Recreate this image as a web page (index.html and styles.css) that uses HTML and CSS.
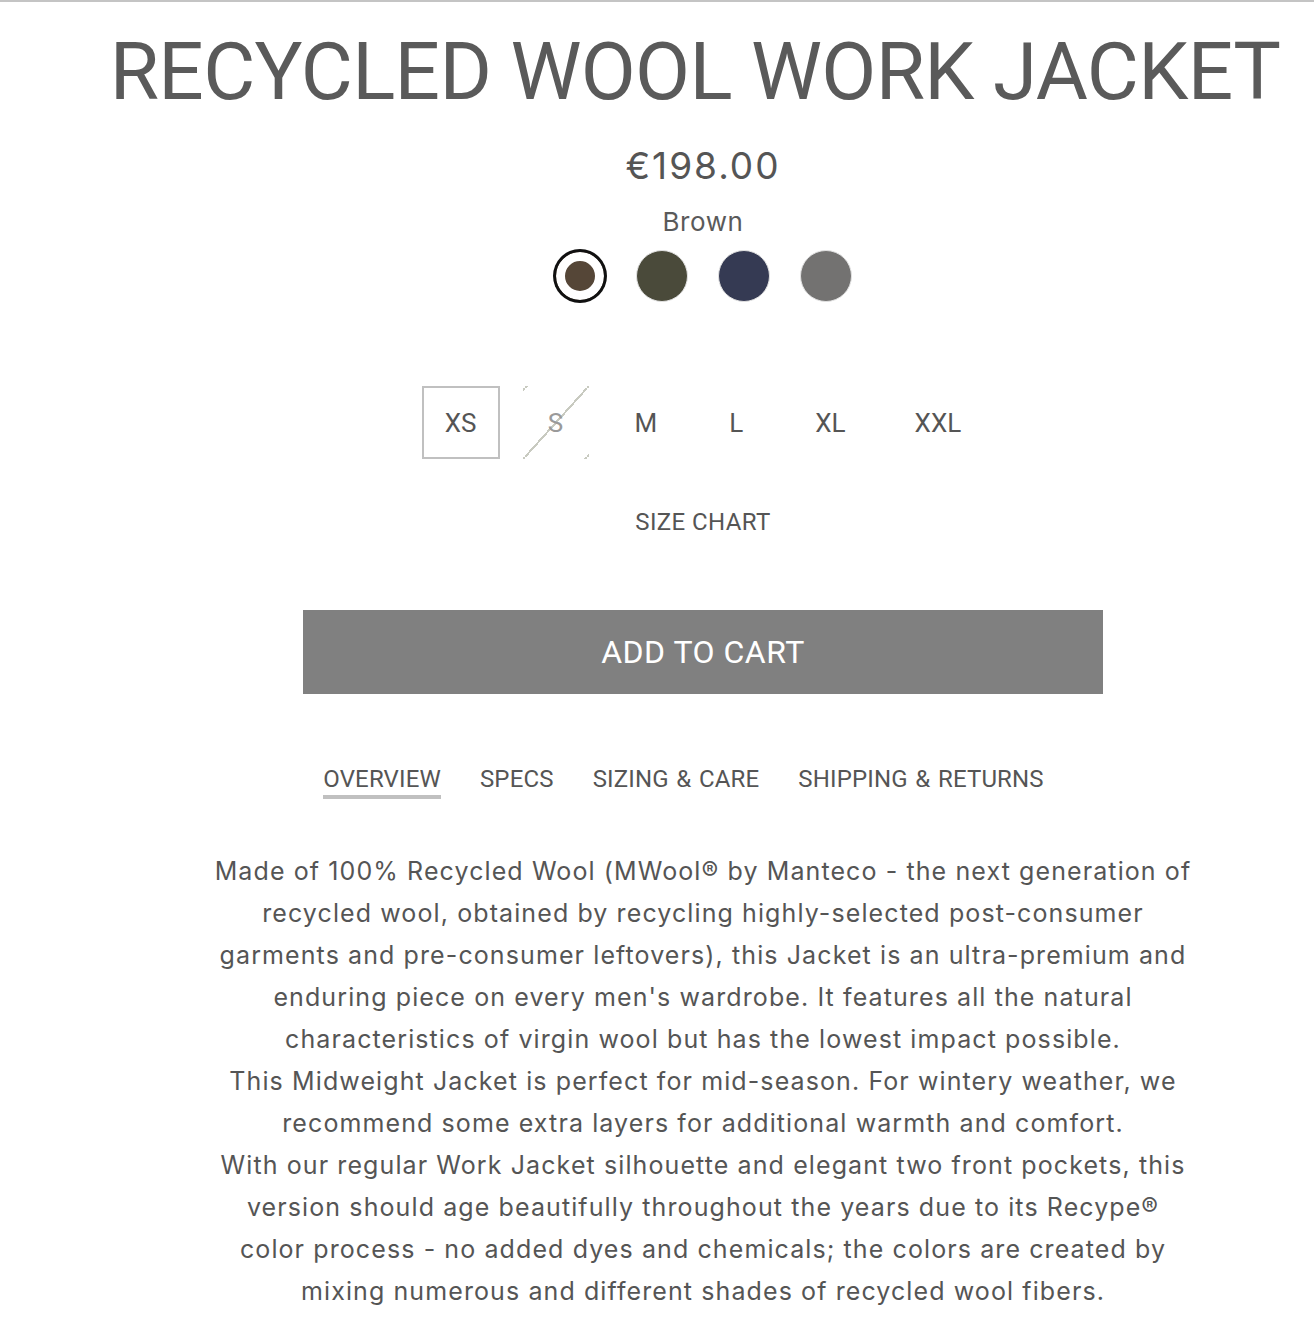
FILE: index.html
```html
<!DOCTYPE html>
<html lang="en">
<head>
<meta charset="utf-8">
<title>Recycled Wool Work Jacket</title>
<link rel="stylesheet" href="styles.css">
</head>
<body>
<div class="page">
  <h1 class="title">RECYCLED WOOL WORK JACKET</h1>
  <div class="product">
    <div class="price">€198.00</div>
    <div class="color-name">Brown</div>
    <div class="swatches">
      <span class="swatch swatch-brown is-selected"></span>
      <span class="swatch swatch-olive"></span>
      <span class="swatch swatch-navy"></span>
      <span class="swatch swatch-grey"></span>
    </div>
    <div class="sizes">
      <span class="size is-selected">XS</span>
      <span class="size is-disabled">S</span>
      <span class="size">M</span>
      <span class="size">L</span>
      <span class="size">XL</span>
      <span class="size">XXL</span>
    </div>
    <a class="size-chart">SIZE CHART</a>
    <button class="add-to-cart">ADD TO CART</button>
    <nav class="tabs">
      <span class="tab is-active">OVERVIEW</span>
      <span class="tab">SPECS</span>
      <span class="tab">SIZING &amp; CARE</span>
      <span class="tab">SHIPPING &amp; RETURNS</span>
    </nav>
    <div class="description">
      <p>Made of 100% Recycled Wool (MWool® by Manteco - the next generation of<br>recycled wool, obtained by recycling highly-selected post-consumer<br>garments and pre-consumer leftovers), this Jacket is an ultra-premium and<br>enduring piece on every men's wardrobe. It features all the natural<br>characteristics of virgin wool but has the lowest impact possible.</p>
      <p>This Midweight Jacket is perfect for mid-season. For wintery weather, we<br>recommend some extra layers for additional warmth and comfort.</p>
      <p>With our regular Work Jacket silhouette and elegant two front pockets, this<br>version should age beautifully throughout the years due to its Recype®<br>color process - no added dyes and chemicals; the colors are created by<br>mixing numerous and different shades of recycled wool fibers.</p>
    </div>
  </div>
</div>
</body>
</html>
```

FILE: styles.css
```css
html, body {
  margin: 0;
  padding: 0;
  background: #fff;
}

.page {
  border-top: 2px solid #c4c4c4;
  color: #575757;
  font-family: Roboto, "Liberation Sans", Arial, sans-serif;
}

.title {
  margin: 30px 0 0;
  padding-left: 76px;
  text-align: center;
  font-family: Roboto, "Liberation Sans", sans-serif;
  font-size: 80px;
  line-height: 80px;
  font-weight: 400;
  letter-spacing: -0.67px;
  white-space: nowrap;
  color: #5a5a5a;
}

.product {
  padding-left: 92px;
  display: flex;
  flex-direction: column;
  align-items: center;
}

.price {
  margin-top: 32px;
  font-family: Inter, "Liberation Sans", sans-serif;
  font-size: 37px;
  line-height: 44px;
  letter-spacing: 2px;
  color: #555;
}

.color-name {
  margin-top: 18px;
  font-family: Inter, "Liberation Sans", sans-serif;
  font-size: 26px;
  line-height: 32px;
  letter-spacing: 0.6px;
  color: #5a5a5a;
}

.swatches {
  margin-top: 12px;
  display: flex;
  gap: 30px;
  align-items: center;
}

.swatch {
  display: block;
  width: 52px;
  height: 52px;
  box-sizing: border-box;
  border-radius: 50%;
  border: 1px solid #e2e2e2;
}

.swatch-brown { background: #554637; }
.swatch-olive { background: #4a4a3a; }
.swatch-navy { background: #353a53; }
.swatch-grey { background: #737271; }

.swatch.is-selected {
  border: 2px solid #111;
  box-shadow: 0 0 0 1px #111, inset 0 0 0 9px #fff;
}

.sizes {
  margin-top: 84px;
  display: flex;
  gap: 23px;
}

.size {
  box-sizing: border-box;
  min-width: 66px;
  height: 73px;
  padding: 0 21px;
  display: flex;
  align-items: center;
  justify-content: center;
  font-size: 26px;
  letter-spacing: 0;
  color: #555;
  border: 2px solid transparent;
}

.size.is-selected {
  border-color: #c0c0c0;
}

.size.is-disabled {
  color: #9a9a9a;
  background: linear-gradient(to bottom right, transparent calc(50% - 1px), #c8cac0 calc(50% - 1px), #c8cac0 calc(50% + 1px), transparent calc(50% + 1px));
}

.size-chart {
  margin-top: 49px;
  font-size: 24px;
  line-height: 28px;
  letter-spacing: 0.4px;
  color: #555;
}

.add-to-cart {
  margin-top: 74px;
  width: 800px;
  height: 84px;
  border: 0;
  background: #808080;
  color: #fff;
  font-family: Roboto, "Liberation Sans", Arial, sans-serif;
  font-size: 32px;
  letter-spacing: 0.5px;
  padding: 0;
}

.tabs {
  margin-top: 71px;
  padding-right: 39px;
  display: flex;
  gap: 39px;
}

.tab {
  font-size: 24px;
  line-height: 28px;
  letter-spacing: 0.15px;
  word-spacing: 1.5px;
  color: #555;
  padding-bottom: 2px;
  border-bottom: 4px solid transparent;
}

.tab.is-active {
  border-bottom-color: #c0c0c0;
}

.description {
  margin-top: 51px;
  font-family: Inter, "Liberation Sans", sans-serif;
  font-size: 25px;
  line-height: 42px;
  letter-spacing: 1.1px;
  text-align: center;
  color: #555;
  white-space: nowrap;
}

.description p {
  margin: 0;
}
```
